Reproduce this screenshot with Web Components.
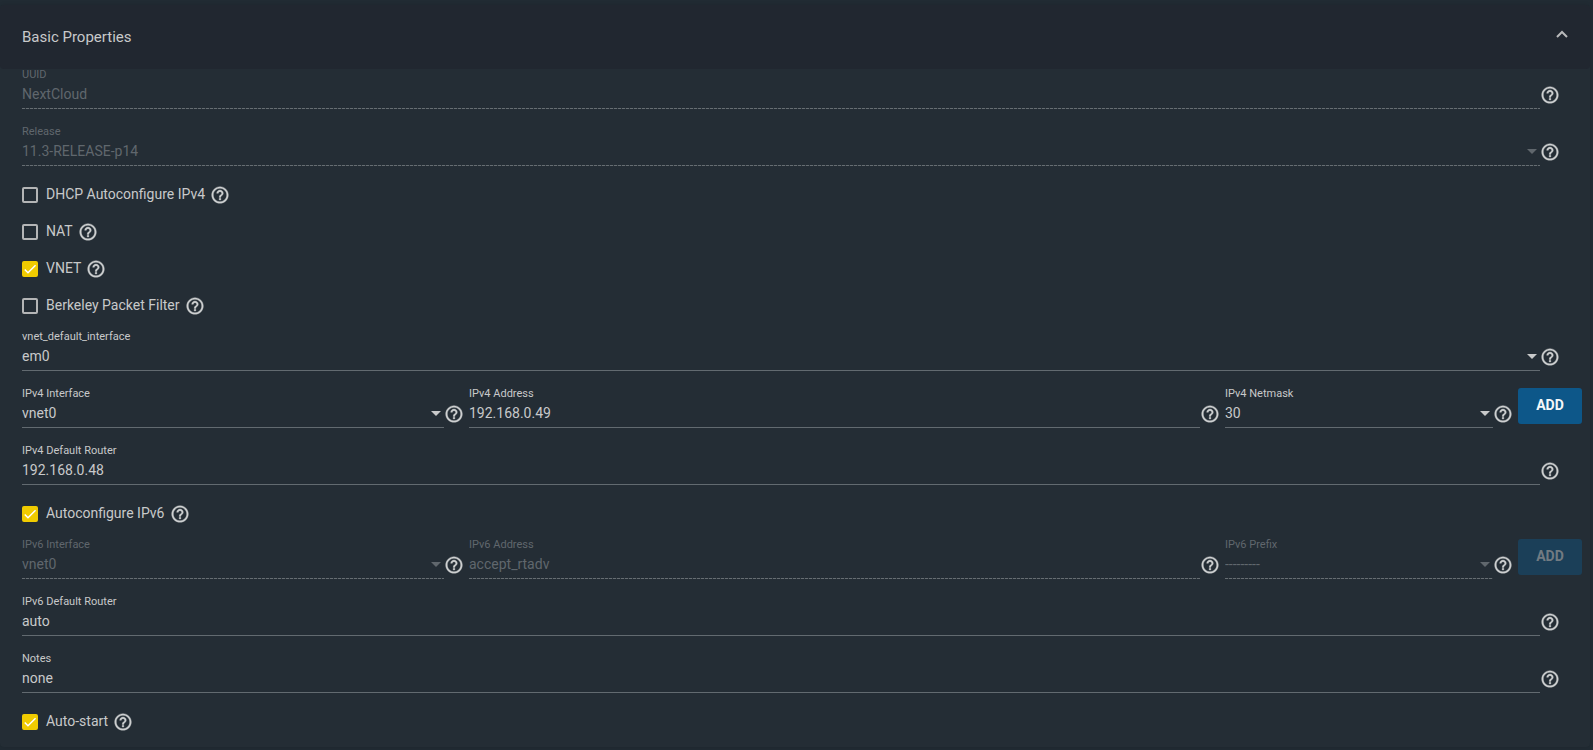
<!DOCTYPE html>
<html lang="en">
<head>
<meta charset="utf-8">
<title>Basic Properties</title>
<style>
  body {
    margin: 0;
    background: #212b33;
    color: #c8c9ca;
    font-family: Roboto, "Liberation Sans", sans-serif;
    font-size: 14px;
  }
  props-panel { margin: 5px 3px 3px 0; }
</style>
</head>
<body>
<props-panel heading="Basic Properties">
  <text-field label="UUID" value="NextCloud" disabled></text-field>
  <select-field label="Release" value="11.3-RELEASE-p14" disabled></select-field>
  <check-group>
    <check-field label="DHCP Autoconfigure IPv4"></check-field>
    <check-field label="NAT"></check-field>
    <check-field label="VNET" checked></check-field>
    <check-field label="Berkeley Packet Filter"></check-field>
  </check-group>
  <select-field label="vnet_default_interface" value="em0"></select-field>
  <address-row>
    <select-field label="IPv4 Interface" value="vnet0"></select-field>
    <text-field label="IPv4 Address" value="192.168.0.49"></text-field>
    <select-field label="IPv4 Netmask" value="30"></select-field>
    <add-button>ADD</add-button>
  </address-row>
  <text-field label="IPv4 Default Router" value="192.168.0.48"></text-field>
  <check-group>
    <check-field label="Autoconfigure IPv6" checked></check-field>
  </check-group>
  <address-row>
    <select-field label="IPv6 Interface" value="vnet0" disabled></select-field>
    <text-field label="IPv6 Address" value="accept_rtadv" disabled></text-field>
    <select-field label="IPv6 Prefix" value="---------" disabled></select-field>
    <add-button disabled>ADD</add-button>
  </address-row>
  <text-field label="IPv6 Default Router" value="auto"></text-field>
  <text-field label="Notes" value="none"></text-field>
  <check-group>
    <check-field label="Auto-start" checked></check-field>
  </check-group>
</props-panel>

<script>
class PropsPanel extends HTMLElement {
  connectedCallback() {
    this.attachShadow({ mode: 'open' }).innerHTML = `
      <style>
        :host { display: block; background: #242d35; border-radius: 4px; box-shadow: 0 0 4px rgba(0,0,0,.12); }
        h2 { margin: 0; }
        button { display: flex; box-sizing: border-box; width: 100%; height: 64px; padding: 0 22px;
          align-items: center; justify-content: space-between; border: 0; border-radius: 4px;
          background: #212730; color: inherit; font: 15px/20px Roboto, "Liberation Sans", sans-serif; cursor: pointer; }
        svg { width: 12px; height: 8px; margin-bottom: 6px; }
        .body { padding: 0 8px 17px 22px; display: flex; flex-direction: column; gap: 17px; }
        ::slotted(text-field), ::slotted(select-field) { margin-right: 22px; }
        ::slotted(check-group) { margin: -6px 0 -10px; }
      </style>
      <h2><button type="button" aria-expanded="true"><span></span>
        <svg viewBox="0 0 12 8" fill="none" stroke="#b9babb" stroke-width="2" aria-hidden="true"><path d="M1 7 6 2l5 5"/></svg>
      </button></h2>
      <div class="body"><slot></slot></div>`;
    this.shadowRoot.querySelector('span').textContent = this.getAttribute('heading');
  }
}

class HelpTip extends HTMLElement {
  connectedCallback() {
    this.attachShadow({ mode: 'open' }).innerHTML = `
      <style>
        :host { display: block; width: 20px; height: 20px; }
        button { display: block; width: 20px; height: 20px; padding: 0; border: 0; background: none; color: #ced0d1; cursor: pointer; }
        svg { display: block; width: 20px; height: 20px; }
      </style>
      <button type="button" aria-label="Help"><svg viewBox="0 0 24 24" fill="currentColor" stroke="currentColor" stroke-width=".4" aria-hidden="true">
        <path d="M11 18h2v-2h-2v2zm1-16C6.480 2 2 6.480 2 12s4.480 10 10 10 10-4.480 10-10S17.520 2 12 2zm0 18c-4.410 0-8-3.590-8-8s3.590-8 8-8 8 3.590 8 8-3.590 8-8 8zm0-14c-2.210 0-4 1.790-4 4h2c0-1.100.9-2 2-2s2 .9 2 2c0 2-3 1.750-3 5h2c0-2.250 3-2.500 3-5 0-2.210-1.790-4-4-4z"/>
      </svg></button>`;
  }
}

const fieldStyles = `
  :host { display: flex; align-items: flex-end; min-width: 0; }
  .field { flex: 1; min-width: 0; display: grid; grid-template: 12px 26px 2px / minmax(0, 1fr); }
  label { font-size: 11px; line-height: 12px; white-space: nowrap; }
  input, select { grid-area: 2 / 1; appearance: none; box-sizing: border-box; width: 100%; height: 26px; margin: 0; padding: 0;
    border: 0; border-radius: 0; outline: 0; background: none; color: inherit; font: 14px/20px Roboto, "Liberation Sans", sans-serif; opacity: 1; }
  option { background: #242d35; }
  .arrow { grid-area: 2 / 1; justify-self: end; align-self: center; width: 10px; height: 5px; margin-right: 3px; pointer-events: none; }
  .line { align-self: end; height: 1px; background: #626a70; }
  help-tip { margin-bottom: 4px; }
  :host([disabled]) .field { color: #60676d; }
  :host([disabled]) .line { background: repeating-linear-gradient(90deg, #666d72 0 3px, #30393f 3px 4px); }
`;

class TextField extends HTMLElement {
  connectedCallback() {
    this.attachShadow({ mode: 'open' }).innerHTML = `
      <style>${fieldStyles}</style>
      <div class="field"><label for="control"></label><input id="control" type="text"><div class="line"></div></div>
      <help-tip></help-tip>`;
    this.shadowRoot.querySelector('label').textContent = this.getAttribute('label');
    const input = this.shadowRoot.querySelector('input');
    input.value = this.getAttribute('value');
    input.disabled = this.hasAttribute('disabled');
  }
}

class SelectField extends HTMLElement {
  connectedCallback() {
    this.attachShadow({ mode: 'open' }).innerHTML = `
      <style>${fieldStyles}</style>
      <div class="field"><label for="control"></label><select id="control"></select>
        <svg class="arrow" viewBox="0 0 10 5" fill="currentColor" aria-hidden="true"><path d="M0 0h10L5 5z"/></svg>
        <div class="line"></div></div>
      <help-tip></help-tip>`;
    this.shadowRoot.querySelector('label').textContent = this.getAttribute('label');
    const select = this.shadowRoot.querySelector('select');
    select.add(new Option(this.getAttribute('value')));
    select.disabled = this.hasAttribute('disabled');
  }
}

class CheckGroup extends HTMLElement {
  connectedCallback() {
    this.attachShadow({ mode: 'open' }).innerHTML = `
      <style>:host { display: flex; flex-direction: column; gap: 1px; }</style><slot></slot>`;
  }
}

class CheckField extends HTMLElement {
  connectedCallback() {
    this.attachShadow({ mode: 'open' }).innerHTML = `
      <style>
        :host { display: flex; align-items: center; height: 36px; gap: 5px; }
        label { display: flex; align-items: center; gap: 8px; line-height: 20px; cursor: pointer; }
        .box { display: grid; width: 16px; height: 16px; }
        input { grid-area: 1 / 1; appearance: none; box-sizing: border-box; width: 16px; height: 16px; margin: 0;
          border: 2px solid #b4b5b6; border-radius: 2px; }
        input:checked { border-color: #f0cb00; background: #f0cb00; }
        svg { grid-area: 1 / 1; width: 16px; height: 16px; pointer-events: none; visibility: hidden; }
        input:checked + svg { visibility: visible; }
        .text { padding-bottom: 2px; }
      </style>
      <label><span class="box"><input type="checkbox">
        <svg viewBox="0 0 24 24" fill="none" stroke="#fff" stroke-width="2.200" aria-hidden="true"><path d="M4.100 12.700 9 17.600 20.300 6.300"/></svg></span>
        <span class="text"></span></label>
      <help-tip></help-tip>`;
    this.shadowRoot.querySelector('.text').textContent = this.getAttribute('label');
    this.shadowRoot.querySelector('input').checked = this.hasAttribute('checked');
  }
}

class AddressRow extends HTMLElement {
  connectedCallback() {
    this.attachShadow({ mode: 'open' }).innerHTML = `
      <style>:host { display: grid; grid-template-columns: 442fr 751fr 288fr 64px; gap: 5px; align-items: start; }</style><slot></slot>`;
  }
}

class AddButton extends HTMLElement {
  connectedCallback() {
    this.attachShadow({ mode: 'open' }).innerHTML = `
      <style>
        :host { display: block; }
        button { display: block; width: 100%; height: 36px; padding: 0 0 2px; border: 0; border-radius: 3px;
          background: #0d5789; color: #f4f7f9; font: 700 14px/20px Roboto, "Liberation Sans", sans-serif; }
        button:disabled { background: #1b3f58; color: #727b82; }
      </style>
      <button type="button"><slot></slot></button>`;
    this.shadowRoot.querySelector('button').disabled = this.hasAttribute('disabled');
  }
}

customElements.define('help-tip', HelpTip);
customElements.define('text-field', TextField);
customElements.define('select-field', SelectField);
customElements.define('check-field', CheckField);
customElements.define('check-group', CheckGroup);
customElements.define('add-button', AddButton);
customElements.define('address-row', AddressRow);
customElements.define('props-panel', PropsPanel);
</script>
</body>
</html>
